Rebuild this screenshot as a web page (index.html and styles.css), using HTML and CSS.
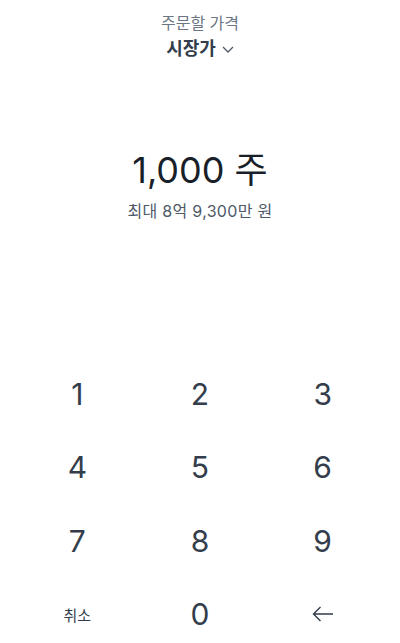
FILE: index.html
```html
<!DOCTYPE html>
<html lang="ko">
<head>
    <meta charset="UTF-8">
    <meta name="viewport" content="width=device-width, initial-scale=1.0">
    <title>주문</title>
    <link rel="stylesheet" href="styles.css">
</head>
<body>

<div class="order">
    <div class="price-type">
        <p class="label">주문할 가격</p>
        <button class="select">시장가
            <svg width="12" height="7" viewBox="0 0 12 7"><path d="M1 1l5 5 5-5" fill="none" stroke="#4e5968" stroke-width="1.3"/></svg>
        </button>
    </div>

    <div class="amount">
        <h1 class="qty">1,000 주</h1>
        <p class="max">최대 8억 9,300만 원</p>
    </div>

    <div class="keypad">
        <button class="key">1</button>
        <button class="key">2</button>
        <button class="key">3</button>
        <button class="key">4</button>
        <button class="key">5</button>
        <button class="key">6</button>
        <button class="key">7</button>
        <button class="key">8</button>
        <button class="key">9</button>
        <button class="key small">취소</button>
        <button class="key">0</button>
        <button class="key">
            <svg width="22" height="16" viewBox="0 0 22 16"><path d="M21 8H1.5M8.5 1L1.5 8l7 7" fill="none" stroke="#333d4b" stroke-width="1.4"/></svg>
        </button>
    </div>
</div>

</body>
</html>
```

FILE: styles.css
```css
body {
    margin: 0;
    padding: 0;
    background: #fff;
    font-family: "Inter", "Noto Sans CJK KR", sans-serif;
    color: #333d4b;
}

.order {
    display: flex;
    flex-direction: column;
    height: 643px;
    overflow: hidden;
}

.price-type {
    text-align: center;
    padding-top: 11px;
}

.label {
    margin: 0;
    font-size: 16px;
    line-height: 24px;
    color: #6b7684;
}

.select {
    border: 0;
    background: none;
    padding: 0;
    font-family: inherit;
    font-size: 18px;
    font-weight: 700;
    line-height: 28px;
    color: #333d4b;
    display: inline-flex;
    align-items: center;
    gap: 6px;
}

.amount {
    text-align: center;
    margin-top: 83px;
}

.qty {
    margin: 0;
    font-size: 36px;
    font-weight: 400;
    line-height: 48px;
    color: #191f28;
}

.max {
    margin: 6px 0 0;
    font-size: 16px;
    line-height: 22px;
    letter-spacing: 0.3px;
    color: #4e5968;
}

.keypad {
    display: grid;
    grid-template-columns: repeat(3, 1fr);
    grid-auto-rows: 73.5px;
    padding: 0 16px;
    margin-top: 135px;
}

.key {
    border: 0;
    background: none;
    font-family: inherit;
    font-size: 30px;
    color: #333d4b;
    display: flex;
    align-items: center;
    justify-content: center;
    padding: 0;
}

.key.small {
    font-size: 15px;
}
```
